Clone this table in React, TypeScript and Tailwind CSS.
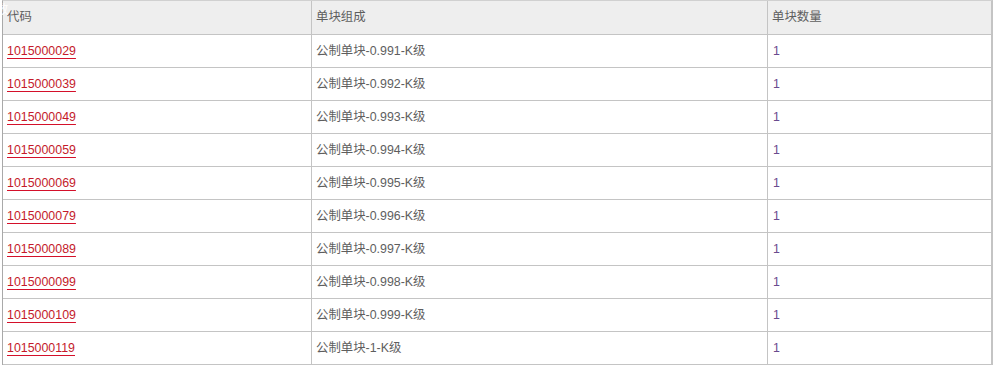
const rows = [
  ["1015000029", "公制单块-0.991-K级"],
  ["1015000039", "公制单块-0.992-K级"],
  ["1015000049", "公制单块-0.993-K级"],
  ["1015000059", "公制单块-0.994-K级"],
  ["1015000069", "公制单块-0.995-K级"],
  ["1015000079", "公制单块-0.996-K级"],
  ["1015000089", "公制单块-0.997-K级"],
  ["1015000099", "公制单块-0.998-K级"],
  ["1015000109", "公制单块-0.999-K级"],
  ["1015000119", "公制单块-1-K级"],
];

export default function App() {
  return (
    <div
      className="relative w-[994px] h-[368px] bg-white overflow-hidden text-[12.4px] text-[#5e5e5e]"
      style={{ fontFamily: '"Liberation Sans", "Noto Sans CJK SC", sans-serif' }}
    >
      <div className="ml-[2px] w-[991px] border-l border-t border-l-[#a9a9a9] border-t-[#d0d0d0] border-r-2 border-r-[#c4c4c4]">
        <div className="grid grid-cols-[309px_456px_1fr] h-[34px] bg-[#eeeeee] border-b border-[#c4c4c4]">
          <div className="flex items-center pl-[4px] border-r border-[#c4c4c4]">代码</div>
          <div className="flex items-center pl-[4px] border-r border-[#c4c4c4]">单块组成</div>
          <div className="flex items-center pl-[4px]">单块数量</div>
        </div>
        {rows.map(([code, name]) => (
          <div key={code} className="grid grid-cols-[309px_456px_1fr] h-[33px] border-b border-[#c4c4c4]">
            <div className="flex items-center pl-[4px] border-r border-[#c4c4c4]">
              <a href="#" className="text-[#c41a2a] underline decoration-[#d4102a] underline-offset-[3px]">
                {code}
              </a>
            </div>
            <div className="flex items-center pl-[4px] border-r border-[#c4c4c4]">{name}</div>
            <div className="flex items-center pl-[5px] text-[#6a4a8e]">1</div>
          </div>
        ))}
      </div>
      <span className="absolute left-[-4px] top-[1px] text-white">数</span>
    </div>
  );
}
